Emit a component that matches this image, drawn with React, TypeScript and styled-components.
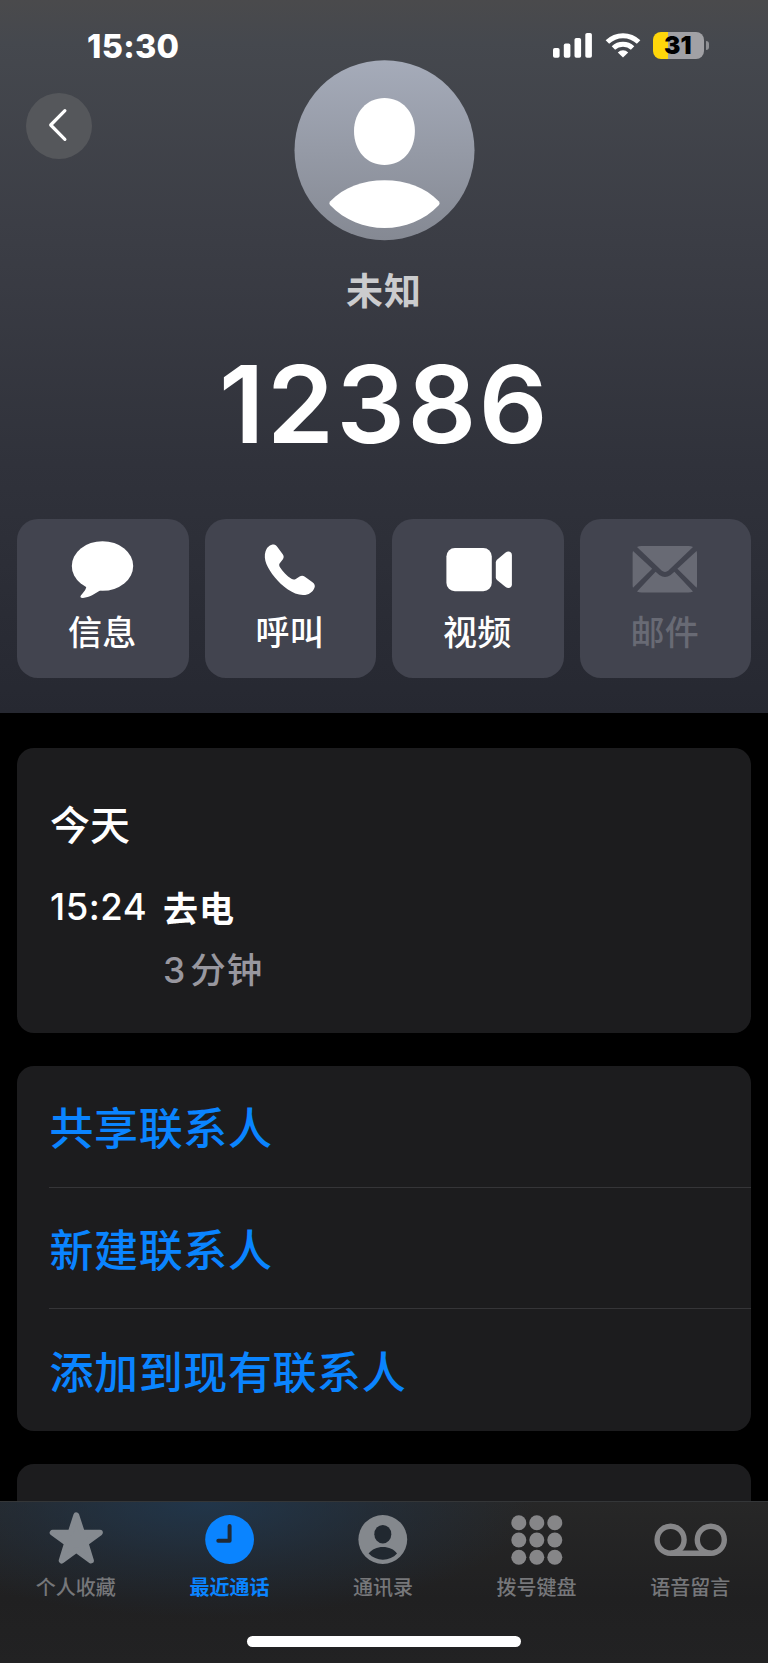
import React, { useState } from "react";
import styled, { createGlobalStyle } from "styled-components";

const GlobalStyle = createGlobalStyle`
	* {
		box-sizing: border-box;
	}
	body {
		margin: 0;
		background: #000;
		color: #fff;
		font-family: Inter, "Noto Sans CJK SC", sans-serif;
	}
	button {
		border: none;
		padding: 0;
		background: none;
		color: inherit;
		font-family: inherit;
		cursor: pointer;
	}
	svg {
		display: block;
	}
`;

const actions = [
	{ label: "信息", icon: "message", disabled: false },
	{ label: "呼叫", icon: "phone", disabled: false },
	{ label: "视频", icon: "video", disabled: false },
	{ label: "邮件", icon: "mail", disabled: true },
];
const contactOptions = ["共享联系人", "新建联系人", "添加到现有联系人"];
const tabs = [
	{ label: "个人收藏", icon: "star", color: "#858a90" },
	{ label: "最近通话", icon: "clock", color: "#858a90" },
	{ label: "通讯录", icon: "contact", color: "#84888d" },
	{ label: "拨号键盘", icon: "keypad", color: "#868688" },
	{ label: "语音留言", icon: "voicemail", color: "#868688" },
];

const App = () => {
	const [activeTab, setActiveTab] = useState<string>("clock");
	return (
		<Screen>
			<GlobalStyle />
			<Header>
				<StatusBar />
				<HeaderTop>
					<BackButton aria-label="返回">
						<svg width="66" height="66" viewBox="0 0 66 66">
							<path
								d="M38.9 17.7 L24.7 32 L38.9 46.3"
								fill="none"
								stroke="#fff"
								strokeWidth="3.2"
								strokeLinecap="round"
								strokeLinejoin="round"
							/>
						</svg>
					</BackButton>
					<Avatar />
				</HeaderTop>
				<CallerLabel>未知</CallerLabel>
				<CallerNumber>12386</CallerNumber>
				<ActionList>
					{actions.map((action) => (
						<ActionButton key={action.icon} disabled={action.disabled}>
							<ActionIcon name={action.icon} />
							<span>{action.label}</span>
						</ActionButton>
					))}
				</ActionList>
			</Header>
			<Content>
				<HistoryCard>
					<HistoryDate>今天</HistoryDate>
					<HistoryRow>
						<HistoryTime>15:24</HistoryTime>
						<HistoryType>去电</HistoryType>
					</HistoryRow>
					<HistoryDuration>
						<span>3</span>分钟
					</HistoryDuration>
				</HistoryCard>
				<OptionCard>
					{contactOptions.map((option) => (
						<OptionRow key={option}>{option}</OptionRow>
					))}
				</OptionCard>
				<NextCard />
			</Content>
			<TabBar>
				<TabList>
					{tabs.map((tab) => (
						<TabButton
							key={tab.icon}
							$active={tab.icon == activeTab}
							$color={tab.color}
							onClick={() => setActiveTab(tab.icon)}
						>
							<TabIcon name={tab.icon} />
							<span>{tab.label}</span>
						</TabButton>
					))}
				</TabList>
				<HomeIndicator />
			</TabBar>
		</Screen>
	);
};
export default App;

const Screen = styled.div`
	display: flex;
	flex-direction: column;
	width: 768px;
	height: 1663px;
	overflow: hidden;
	background: #000;
`;
const Header = styled.header`
	flex: none;
	height: 713px;
	background: linear-gradient(
		180deg,
		#4a4a4c 0%,
		#45484e 6%,
		#3b3d45 34%,
		#30323b 65%,
		#262831 100%
	);
`;
const HeaderTop = styled.div`
	display: grid;
	grid-template-columns: 1fr 181px 1fr;
	height: 181px;
`;
const BackButton = styled.button`
	width: 66px;
	height: 66px;
	margin: 33px 0 0 26px;
	border-radius: 50%;
	background: #55575b;
`;
const CallerLabel = styled.div`
	margin-top: 23px;
	text-align: center;
	font-size: 37px;
	line-height: 56px;
	font-weight: 700;
	letter-spacing: 1px;
	color: #cbccce;
`;
const CallerNumber = styled.h1`
	margin: 19px 0 0;
	padding-left: 1px;
	text-align: center;
	font-size: 107.5px;
	line-height: 130px;
	font-weight: 600;
	letter-spacing: 2.5px;
`;
const ActionList = styled.div`
	display: grid;
	grid-template-columns: repeat(4, 1fr);
	gap: 16px;
	margin-top: 50px;
	padding: 0 17px;
`;
const ActionButton = styled.button`
	display: flex;
	flex-direction: column;
	align-items: center;
	height: 159px;
	padding-top: 19px;
	border-radius: 21px;
	background: #42444f;
	color: ${({ disabled }) => (disabled ? "#686a74" : "#fff")};
	span {
		margin-top: 11px;
		padding-right: 1px;
		font-size: 34px;
		line-height: 44px;
		font-weight: 500;
		letter-spacing: 0.3px;
	}
`;
const Content = styled.main`
	flex: 1;
	min-height: 0;
	overflow: hidden;
	padding: 35px 17px 0;
`;
const Card = styled.section`
	border-radius: 17px;
	background: #1c1c1e;
`;
const HistoryCard = styled(Card)`
	height: 285px;
	padding: 51px 33px 0;
`;
const HistoryDate = styled.h2`
	margin: 0;
	font-size: 40px;
	line-height: 54px;
	font-weight: 500;
`;
const HistoryRow = styled.div`
	display: flex;
	align-items: center;
	height: 54px;
	margin-top: 27px;
`;
const HistoryTime = styled.span`
	width: 113px;
	font-size: 36.5px;
	line-height: 54px;
	font-weight: 500;
	letter-spacing: 0.5px;
`;
const HistoryType = styled.span`
	padding-bottom: 2px;
	font-size: 35px;
	font-weight: 700;
	letter-spacing: 1px;
`;
const HistoryDuration = styled.div`
	padding-left: 113px;
	margin-top: 11px;
	font-size: 35.5px;
	line-height: 52px;
	font-weight: 500;
	letter-spacing: 1px;
	color: #98979f;
	span {
		margin-right: 4px;
	}
`;
const OptionCard = styled(Card)`
	margin-top: 33px;
	padding-left: 32px;
`;
const OptionRow = styled.button`
	display: block;
	width: 100%;
	height: 121.5px;
	padding: 0 0 0 0.5px;
	text-align: left;
	font-size: 44px;
	font-weight: 500;
	letter-spacing: 0.6px;
	color: #0a84ff;
	&:not(:last-child) {
		border-bottom: 1px solid #353538;
	}
`;
const NextCard = styled(Card)`
	height: 120px;
	margin-top: 33px;
`;
const TabBar = styled.footer`
	flex: none;
	height: 162px;
	border-top: 1px solid #343638;
	background: radial-gradient(
			ellipse 330px 115px at 205px 0,
			rgba(32, 56, 80, 0.85),
			rgba(32, 52, 74, 0.4) 55%,
			transparent
		),
		linear-gradient(180deg, #272727, #202021 60%, #222223);
`;
const TabList = styled.nav`
	display: grid;
	grid-template-columns: repeat(5, 1fr);
	height: 134px;
	padding-top: 8px;
`;
const TabButton = styled.button<{ $active: boolean; $color: string }>`
	display: flex;
	flex-direction: column;
	align-items: center;
	color: ${({ $active, $color }) => ($active ? "#0a84ff" : $color)};
	span {
		margin-top: 7.5px;
		padding-right: 2px;
		font-size: 20px;
		line-height: 28px;
		font-weight: ${({ $active }) => ($active ? 700 : 500)};
		color: ${({ $active }) => ($active ? "#0a84ff" : "#76777a")};
	}
`;
const HomeIndicator = styled.div`
	width: 274px;
	height: 11px;
	margin: 0 auto;
	border-radius: 6px;
	background: #fff;
`;

const StatusBar = () => (
	<StatusWrapper>
		<StatusTime>15:30</StatusTime>
		<StatusIcons>
			<svg width="40" height="27" viewBox="0 0 40 27" fill="#fff">
				<rect x="0" y="16" width="6.6" height="9.7" rx="1.8" />
				<rect x="10.8" y="11.6" width="6.6" height="14.1" rx="1.8" />
				<rect x="21.5" y="6" width="6.6" height="19.7" rx="1.8" />
				<rect x="32.3" y="1" width="6.6" height="24.7" rx="1.8" />
			</svg>
			<svg width="36" height="27" viewBox="0 0 36 27">
				<g fill="none" stroke="#fff" strokeWidth="5">
					<path d="M2.4 10 A22.4 22.4 0 0 1 33.6 10" />
					<path d="M8.4 16 A14.1 14.1 0 0 1 27.6 16" />
				</g>
				<path d="M18 25.6 L12.8 20.4 A7.6 7.6 0 0 1 23.2 20.4 Z" fill="#fff" />
			</svg>
			<Battery>
				<BatteryLevel>31</BatteryLevel>
				<BatteryCap />
			</Battery>
		</StatusIcons>
	</StatusWrapper>
);
const StatusWrapper = styled.div`
	display: flex;
	justify-content: space-between;
	height: 60px;
	padding: 32px 59px 0 87px;
`;
const StatusTime = styled.span`
	font-size: 32.5px;
	line-height: 29px;
	font-weight: 800;
	letter-spacing: 0.3px;
`;
const StatusIcons = styled.div`
	display: flex;
	align-items: flex-start;
	gap: 12px;
`;
const Battery = styled.div`
	display: flex;
	align-items: center;
	gap: 1.5px;
`;
const BatteryLevel = styled.div`
	width: 51px;
	height: 27px;
	border-radius: 8px;
	background: linear-gradient(90deg, #ffd60a 15.5px, #a1a1a5 15.5px);
	color: #000;
	text-align: center;
	font-size: 24.5px;
	line-height: 27px;
	font-weight: 900;
	padding-right: 1.5px;
`;
const BatteryCap = styled.div`
	width: 3.5px;
	height: 9px;
	border-radius: 0 5px 5px 0;
	background: #8f9094;
`;

const Avatar = () => (
	<svg width="181" height="181" viewBox="0 0 181 181">
		<defs>
			<linearGradient id="avatarFill" x1="0" y1="0" x2="0" y2="1">
				<stop offset="0" stopColor="#a5abb9" />
				<stop offset="1" stopColor="#858993" />
			</linearGradient>
		</defs>
		<circle cx="90.5" cy="90.2" r="90" fill="url(#avatarFill)" />
		<path
			d="M90.5 38 C108 38 120.9 52 120.9 71 C120.9 91 108 105 90.5 105 C73 105 60 91 60 71 C60 52 73 38 90.5 38Z"
			fill="#fff"
		/>
		<path
			d="M36 141.5 C50 127 69 120.2 90.5 120.2 C112 120.2 131 127 145 141.5 Q146.4 143.3 145 145 C130 160.5 111 168 90.5 168 C70 168 51 160.5 36 145 Q34.6 143.3 36 141.5Z"
			fill="#fff"
		/>
	</svg>
);

const ActionIcon = ({ name }: { name: string }) => (
	<svg width="72" height="62" viewBox="0 0 72 62" fill="currentColor">
		{name == "message" && (
			<>
				<ellipse cx="35.5" cy="28" rx="30.7" ry="24.8" />
				<path d="M19.5 47.5 C19.5 51 16.5 54.5 14 57.2 C12.6 59 13.8 60.2 16 60 C22.5 59.3 28 56 33.5 52 Z" />
			</>
		)}
		{name == "phone" && (
			<path d="M19.8 6.6 C21.3 6.6 22.3 7.6 23.4 9 L28.9 16.6 C30 18.3 29.9 19.8 28.9 21.2 L25.6 25.6 C25 26.8 25.1 27.6 25.8 28.9 C28.5 33.3 33 37.8 37.4 40.8 C38.9 41.8 40.4 41.8 41.8 41 L45.6 38.5 C47.4 37.5 49.2 37.6 50.9 38.7 L58.5 44.2 C60.8 46 61.3 47.6 60.4 50 C58.6 54.4 54.6 57.1 49 57 C44 57 38.5 54.6 33.5 51.2 C24 44.5 16 34.5 12.4 26 C10.7 21.6 10.3 17 11.5 13.5 C12.9 9.3 16 6.6 19.8 6.6Z" />
		)}
		{name == "video" && (
			<>
				<rect x="4.4" y="10" width="45.4" height="43.3" rx="8.5" />
				<path d="M53.8 24.6 Q53.8 23 55 21.8 L63.3 14.8 C66.3 12.4 69.9 13.7 69.9 17 L69.9 46.6 C69.9 50 66.3 51 63.3 48.8 L55 42 Q53.8 40.9 53.8 39.3Z" />
			</>
		)}
		{name == "mail" && (
			<>
				<path d="M8 9 Q10 8 12.5 8 H59.5 Q62 8 64 9 L39.4 32.5 Q36 35.3 32.6 32.5Z" />
				<path d="M4 13 L23.2 30.7 L4 49.8 Q3.6 48.5 3.6 47 V16 Q3.6 14.3 4 13Z" />
				<path d="M67.6 13 L48.4 30.7 L67.6 49.8 Q68 48.5 68 47 V16 Q68 14.3 67.6 13Z" />
				<path d="M8 53.6 L26.6 33.8 L30.3 37 Q36 41 41.7 37 L45.4 33.8 L64 53.6 Q62 54.6 59.5 54.6 H12.5 Q10 54.6 8 53.6Z" />
			</>
		)}
	</svg>
);

const TabIcon = ({ name }: { name: string }) => (
	<svg width="76" height="56" viewBox="0 0 76 56" fill="currentColor">
		{name == "star" && (
			<path
				d="M37.3 5.2 L43 22.6 L61 22.6 L46.6 33.2 L52 50.6 L37.3 40 L22.6 50.6 L28 33.2 L13.6 22.6 L31.6 22.6Z"
				stroke="currentColor"
				strokeWidth="5.8"
				strokeLinejoin="round"
			/>
		)}
		{name == "clock" && (
			<>
				<circle cx="37.6" cy="29.5" r="24.4" />
				<path
					d="M37.6 16 V30.8 H26.3"
					fill="none"
					stroke="#202a36"
					strokeWidth="4"
					strokeLinecap="round"
					strokeLinejoin="round"
				/>
			</>
		)}
		{name == "contact" && (
			<>
				<circle cx="36.8" cy="29.5" r="24.4" />
				<g fill="#212830">
					<ellipse cx="36.8" cy="24.2" rx="8.5" ry="9.3" />
					<path d="M22.6 43.6 C26 39.3 31 37 36.8 37 C43 37 48 39.3 51 43.6 C47.5 47.6 42.5 49.7 36.8 49.7 C31.5 49.7 26.5 47.6 22.6 43.6Z" />
				</g>
			</>
		)}
		{name == "keypad" &&
			[12.7, 30, 47.3].map((y) =>
				[18.8, 36.8, 54.8].map((x) => (
					<circle key={x + "-" + y} cx={x} cy={y} r="7.5" />
				))
			)}
		{name == "voicemail" && (
			<g fill="none" stroke="currentColor" strokeWidth="5.4">
				<circle cx="17.6" cy="29.7" r="13.5" />
				<circle cx="57.8" cy="29.7" r="13.5" />
				<path d="M17.6 43.2 H57.8" />
			</g>
		)}
	</svg>
);
